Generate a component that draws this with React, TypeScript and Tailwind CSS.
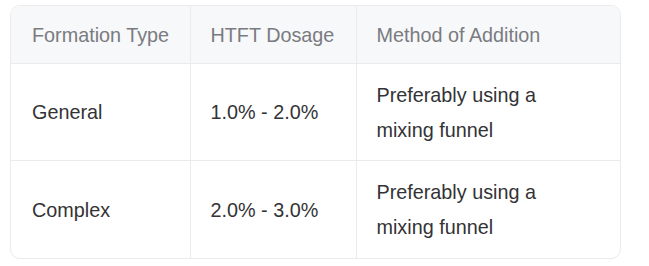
const rows = [
  { type: 'General', dosage: '1.0% - 2.0%', method: 'Preferably using a mixing funnel' },
  { type: 'Complex', dosage: '2.0% - 3.0%', method: 'Preferably using a mixing funnel' },
]

export default function App() {
  return (
    <div className="w-[649px] h-[266px] bg-white pt-[5px] pl-[10px] font-['Liberation_Sans',Arial,sans-serif]">
      <div className="w-[611px] overflow-hidden rounded-[10px] border border-[#ebebed]">
        <table className="w-full border-collapse table-fixed text-[19.8px] leading-[35px]">
          <colgroup>
            <col className="w-[179px]" />
            <col className="w-[166px]" />
            <col />
          </colgroup>
          <thead>
            <tr className="bg-[#f7f8fa] h-[57px] text-[#7a7b80]">
              <th className="font-normal text-left pl-[21px] pt-[2px] border-r border-[#ebebed]">Formation Type</th>
              <th className="font-normal text-left pl-[20px] pt-[2px] border-r border-[#ebebed]">HTFT Dosage</th>
              <th className="font-normal text-left pl-[20px] pt-[2px]">Method of Addition</th>
            </tr>
          </thead>
          <tbody className="text-[#333335]">
            {rows.map((r, i) => (
              <tr key={i} className={i > 0 ? 'border-t border-[#ebebed] h-[98px]' : 'border-t border-[#ebebed] h-[97px]'}>
                <td className="pl-[21px] pt-[2px] border-r border-[#ebebed]">{r.type}</td>
                <td className="pl-[20px] pt-[2px] border-r border-[#ebebed]">{r.dosage}</td>
                <td className="pl-[20px] pr-[60px] pt-[14px] pb-[12px]">{r.method}</td>
              </tr>
            ))}
          </tbody>
        </table>
      </div>
    </div>
  )
}
